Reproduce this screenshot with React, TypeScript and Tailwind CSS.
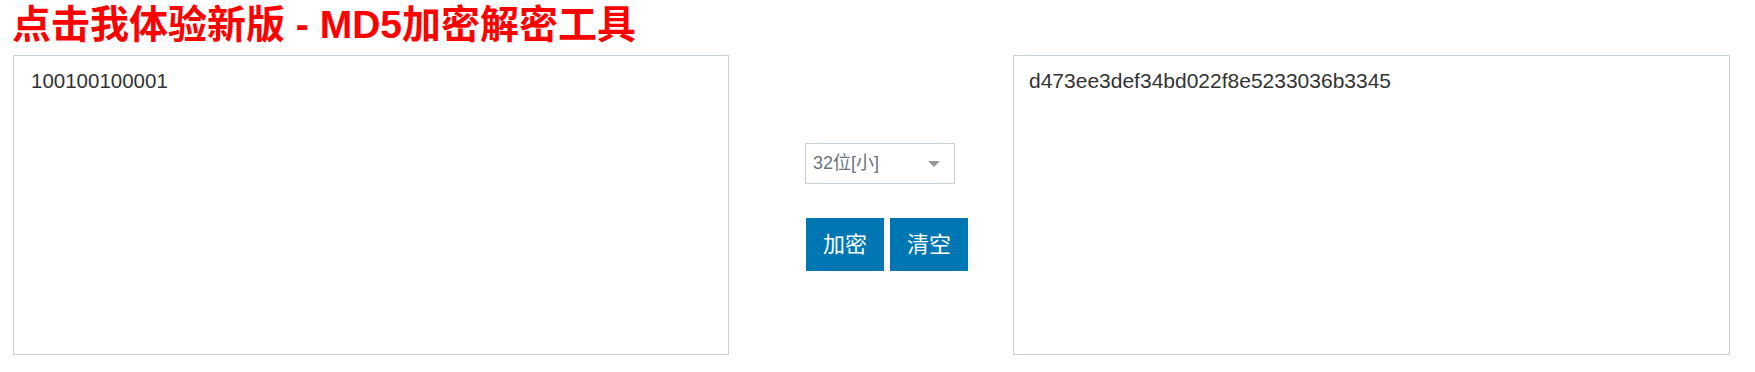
import React from "react";

export default function App() {
  const font = { fontFamily: '"Liberation Sans", Arial, "Noto Sans CJK SC", sans-serif' };
  return (
    <div className="w-[1755px] h-[372px] bg-white" style={font}>
      <h1 className="pl-[12px] h-[50px] leading-[50px] text-[39px] font-bold text-[#ff0000] whitespace-nowrap">
        点击我体验新版 - MD5加密解密工具
      </h1>
      <div className="flex mt-[5px] pl-[13px]">
        <textarea
          readOnly
          value="100100100001"
          className="w-[716px] h-[300px] border border-[#c6cfdb] resize-none outline-none pl-[17px] pr-[17px] py-[10px] text-[20.5px] leading-[30px] text-[#333333] bg-white"
          style={font}
        />
        <div className="w-[284px] flex flex-col pl-[76px] pt-[88px]">
          <div className="w-[150px] h-[41px] border border-[#c6cfdb] flex items-center justify-between pl-[7px] pr-[14px] text-[18px] text-[#6b7280]">
            <span>32位[小]</span>
            <span className="w-0 h-0 border-l-[6px] border-r-[6px] border-t-[6px] border-l-transparent border-r-transparent border-t-[#999999]" />
          </div>
          <div className="flex gap-[6px] mt-[34px] pl-[1px]">
            <button className="w-[78px] h-[53px] bg-[#0077b3] text-white text-[22px]">加密</button>
            <button className="w-[78px] h-[53px] bg-[#0077b3] text-white text-[22px]">清空</button>
          </div>
        </div>
        <textarea
          readOnly
          value="d473ee3def34bd022f8e5233036b3345"
          className="w-[717px] h-[300px] border border-[#c6cfdb] resize-none outline-none pl-[15px] pr-[17px] py-[10px] text-[21px] leading-[30px] text-[#333333] bg-white"
          style={font}
        />
      </div>
    </div>
  );
}
